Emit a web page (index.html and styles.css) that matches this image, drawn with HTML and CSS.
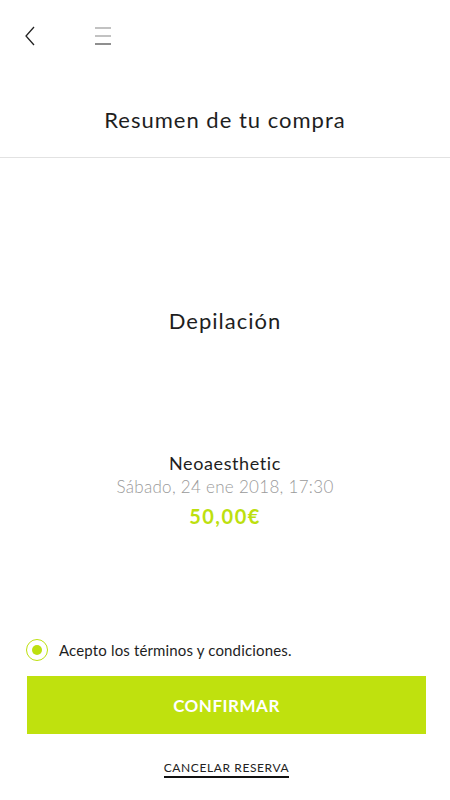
FILE: index.html
```html
<!DOCTYPE html>
<html lang="es">
<head>
    <meta charset="UTF-8">
    <title>Resumen de tu compra</title>
    <link rel="stylesheet" href="styles.css">
</head>
<body>
    <div class="header">
        <div class="topbar">
            <svg class="icon-back" width="12" height="20" viewBox="0 0 12 20">
                <polyline points="10,1 2,10 10,19" fill="none" stroke="#222" stroke-width="1.3"/>
            </svg>
            <svg class="icon-menu" width="16" height="18" viewBox="0 0 16 18">
                <line x1="0" y1="1" x2="16" y2="1" stroke="#999" stroke-width="1.2"/>
                <line x1="0" y1="9" x2="16" y2="9" stroke="#999" stroke-width="1.2"/>
                <line x1="0" y1="17" x2="16" y2="17" stroke="#444" stroke-width="1.2"/>
            </svg>
        </div>
        <h1 class="title">Resumen de tu compra</h1>
    </div>

    <div class="summary">
        <h2 class="service">Depilación</h2>
        <div class="details">
            <div class="center-name">Neoaesthetic</div>
            <div class="date">Sábado, 24 ene 2018, 17:30</div>
            <div class="price">50,00€</div>
        </div>
    </div>

    <div class="footer">
        <label class="terms">
            <span class="radio"><span class="radio-dot"></span></span>
            Acepto los términos y condiciones.
        </label>
        <button class="confirm">CONFIRMAR</button>
        <div class="cancel-row">
            <a class="cancel" href="#">CANCELAR RESERVA</a>
        </div>
    </div>
</body>
</html>
```

FILE: styles.css
```css
body {
    margin: 0;
    font-family: Lato, "Open Sans", sans-serif;
    color: #1e1e1e;
    background: #fff;
}
.header {
    border-bottom: 1px solid #e2e2e2;
}
.topbar {
    height: 72px;
    display: flex;
    align-items: center;
    padding-left: 24px;
}
.icon-back {
    margin-right: 59px;
}
.title {
    margin: 0;
    padding: 35px 0 24px;
    font-size: 22px;
    font-weight: 400;
    line-height: 26px;
    letter-spacing: 1px;
    text-align: center;
}
.summary {
    text-align: center;
}
.service {
    margin: 150px 0 0;
    font-size: 22px;
    font-weight: 400;
    line-height: 26px;
    letter-spacing: 1px;
}
.details {
    margin-top: 117px;
}
.center-name {
    font-size: 18px;
    line-height: 24px;
    letter-spacing: 0.6px;
}
.date {
    font-size: 17px;
    line-height: 24px;
    letter-spacing: 0.3px;
    color: #9a9a9a;
    font-weight: 300;
}
.price {
    margin-top: 4px;
    font-size: 20px;
    line-height: 26px;
    letter-spacing: 1.5px;
    font-weight: 700;
    color: #bde00e;
}
.footer {
    margin-top: 109px;
    padding: 0 24px 0 27px;
}
.terms {
    display: flex;
    align-items: center;
    height: 24px;
    font-size: 15px;
    letter-spacing: 0.15px;
    margin-left: -1px;
}
.radio {
    width: 20px;
    height: 20px;
    border: 1.5px solid #bde00e;
    border-radius: 50%;
    display: flex;
    align-items: center;
    justify-content: center;
    margin-right: 11px;
}
.radio-dot {
    width: 10px;
    height: 10px;
    border-radius: 50%;
    background: #bde00e;
}
.confirm {
    display: block;
    width: 100%;
    height: 58px;
    margin-top: 14px;
    border: none;
    background-color: #bfe10e;
    color: #fff;
    font-family: inherit;
    font-size: 17px;
    font-weight: 700;
    letter-spacing: 0.5px;
    cursor: pointer;
}
.cancel-row {
    margin-top: 22px;
    text-align: center;
}
.cancel {
    display: inline-block;
    font-size: 12px;
    line-height: 16px;
    letter-spacing: 0.6px;
    color: #222;
    text-decoration: none;
    border-bottom: 2px solid #111;
}
```
